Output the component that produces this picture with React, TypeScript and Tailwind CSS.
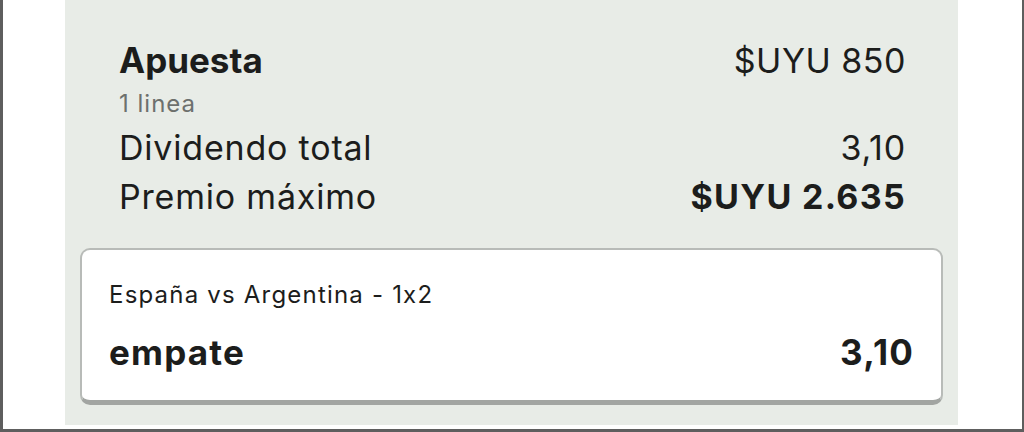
import React from "react";

const font = { fontFamily: "Inter, 'Noto Sans', sans-serif" };

export default function App() {
  return (
    <div
      className="w-[1024px] h-[432px] bg-white border-l-[3px] border-r-[2px] border-b-[3px] border-[#5e5e5e] pr-[1px] flex overflow-hidden [font-feature-settings:'calt'_0]"
      style={font}
    >
      <div className="ml-[62px] w-[893px] h-[425px] bg-[#e8ece7] px-[15px] pt-[36px] text-[#1c1d1c]">
        {/* summary */}
        <div className="pl-[39px] pr-[37px]">
          <div className="flex justify-between items-baseline leading-[48px]">
            <span className="text-[35px] font-bold">Apuesta</span>
            <span className="text-[34px] tracking-[0.5px]">$UYU 850</span>
          </div>
          <div className="text-[24px] leading-[38px] tracking-[1px] text-[#6d706d]">1 linea</div>
          <div className="flex justify-between items-baseline text-[34px] leading-[49px] tracking-[0.8px]">
            <span>Dividendo total</span>
            <span>3,10</span>
          </div>
          <div className="flex justify-between items-baseline text-[34px] leading-[49px] tracking-[0.8px]">
            <span>Premio máximo</span>
            <span className="font-bold tracking-[1.3px]">$UYU 2.635</span>
          </div>
        </div>

        {/* selection card */}
        <div className="mt-[27px] bg-white rounded-[10px] border-2 border-[#b8bbb8] border-b-[5px] border-b-[#a2a5a2] pl-[27px] pr-[27px] pt-[29px] pb-[22px]">
          <div className="text-[24px] leading-[32px] tracking-[1.2px]">España vs Argentina - 1x2</div>
          <div className="mt-[15px] flex justify-between items-baseline text-[35px] font-bold leading-[52px] tracking-[1.2px]">
            <span>empate</span>
            <span>3,10</span>
          </div>
        </div>
      </div>
    </div>
  );
}
